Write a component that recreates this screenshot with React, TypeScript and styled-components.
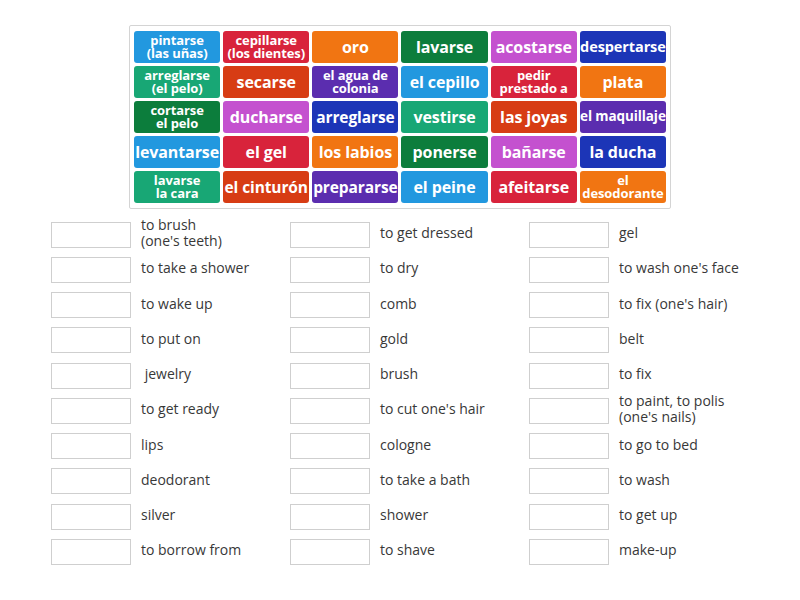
import React from "react";
import styled, { createGlobalStyle } from "styled-components";

const Global = createGlobalStyle`
  html, body { margin: 0; padding: 0; background: #ffffff; }
  body { font-family: "Open Sans", "DejaVu Sans", sans-serif; }
`;

const COLORS: Record<string, string> = {
  blue: "#2298df",
  red: "#d8233b",
  orange: "#f17512",
  darkgreen: "#0c7d3c",
  pink: "#c451cf",
  darkblue: "#1c35b7",
  green: "#18a775",
  redorange: "#d73c14",
  purple: "#5b2daf",
};

type Tile = { text: string[]; color: string; size?: number };

const tiles: Tile[] = [
  { text: ["pintarse", "(las uñas)"], color: "blue", size: 13 },
  { text: ["cepillarse", "(los dientes)"], color: "red", size: 13 },
  { text: ["oro"], color: "orange" },
  { text: ["lavarse"], color: "darkgreen" },
  { text: ["acostarse"], color: "pink" },
  { text: ["despertarse"], color: "darkblue", size: 14.5 },

  { text: ["arreglarse", "(el pelo)"], color: "green", size: 13 },
  { text: ["secarse"], color: "redorange" },
  { text: ["el agua de", "colonia"], color: "purple", size: 13 },
  { text: ["el cepillo"], color: "blue" },
  { text: ["pedir", "prestado a"], color: "red", size: 13 },
  { text: ["plata"], color: "orange" },

  { text: ["cortarse", "el pelo"], color: "darkgreen", size: 13 },
  { text: ["ducharse"], color: "pink" },
  { text: ["arreglarse"], color: "darkblue", size: 15.5 },
  { text: ["vestirse"], color: "green" },
  { text: ["las joyas"], color: "redorange" },
  { text: ["el maquillaje"], color: "purple", size: 13.5 },

  { text: ["levantarse"], color: "blue", size: 16 },
  { text: ["el gel"], color: "red" },
  { text: ["los labios"], color: "orange" },
  { text: ["ponerse"], color: "darkgreen" },
  { text: ["bañarse"], color: "pink" },
  { text: ["la ducha"], color: "darkblue" },

  { text: ["lavarse", "la cara"], color: "green", size: 13 },
  { text: ["el cinturón"], color: "redorange", size: 15.5 },
  { text: ["prepararse"], color: "purple", size: 15.5 },
  { text: ["el peine"], color: "blue" },
  { text: ["afeitarse"], color: "red" },
  { text: ["el", "desodorante"], color: "orange", size: 13 },
];

const columns: string[][][] = [
  [
    ["to brush", "(one's teeth)"],
    ["to take a shower"],
    ["to wake up"],
    ["to put on"],
    [" jewelry"],
    ["to get ready"],
    ["lips"],
    ["deodorant"],
    ["silver"],
    ["to borrow from"],
  ],
  [
    ["to get dressed"],
    ["to dry"],
    ["comb"],
    ["gold"],
    ["brush"],
    ["to cut one's hair"],
    ["cologne"],
    ["to take a bath"],
    ["shower"],
    ["to shave"],
  ],
  [
    ["gel"],
    ["to wash one's face"],
    ["to fix (one's hair)"],
    ["belt"],
    ["to fix"],
    ["to paint, to polis", "(one's nails)"],
    ["to go to bed"],
    ["to wash"],
    ["to get up"],
    ["make-up"],
  ],
];

const Page = styled.div`
  width: 800px;
  height: 600px;
  padding-top: 25px;
  box-sizing: border-box;
`;

const Panel = styled.div`
  width: 542px;
  box-sizing: border-box;
  margin: 0 auto;
  border: 1px solid #d4d4d4;
  border-radius: 2px;
  padding: 5px 4px;
  display: grid;
  grid-template-columns: repeat(6, 1fr);
  grid-auto-rows: 32px;
  gap: 3px 3px;
  background: #fff;
`;

const TileBox = styled.div<{ $bg: string; $size: number }>`
  background: ${(p) => p.$bg};
  border-radius: 3px;
  color: #ffffff;
  font-family: "Open Sans", sans-serif;
  font-weight: 700;
  font-size: ${(p) => p.$size}px;
  line-height: ${(p) => (p.$size <= 13.5 ? 13.5 : 18)}px;
  display: flex;
  align-items: center;
  justify-content: center;
  text-align: center;
  white-space: nowrap;
  overflow: hidden;
  letter-spacing: -0.1px;
`;

const List = styled.div`
  display: flex;
  padding-left: 51px;
  margin-top: 6.5px;
`;

const Column = styled.div`
  width: 239px;
  display: flex;
  flex-direction: column;
`;

const Row = styled.div`
  height: 35.25px;
  display: flex;
  align-items: center;
  gap: 10px;
`;

const Slot = styled.div`
  width: 80px;
  height: 26px;
  box-sizing: border-box;
  border: 1px solid #cfcfcf;
  background: #fff;
  flex-shrink: 0;
  margin-top: 3px;
`;

const Label = styled.div`
  font-family: "Open Sans", sans-serif;
  font-size: 14px;
  line-height: 16px;
  color: #383838;
  white-space: pre;
`;

function Lines({ lines }: { lines: string[] }) {
  return (
    <span>
      {lines.map((l, j) => (
        <React.Fragment key={j}>
          {j > 0 && <br />}
          {l}
        </React.Fragment>
      ))}
    </span>
  );
}

export default function App() {
  return (
    <Page>
      <Global />
      <Panel>
        {tiles.map((t, i) => (
          <TileBox key={i} $bg={COLORS[t.color]} $size={t.size ?? 16}>
            <Lines lines={t.text} />
          </TileBox>
        ))}
      </Panel>
      <List>
        {columns.map((col, ci) => (
          <Column key={ci}>
            {col.map((lines, ri) => (
              <Row key={ri}>
                <Slot />
                <Label>
                  <Lines lines={lines} />
                </Label>
              </Row>
            ))}
          </Column>
        ))}
      </List>
    </Page>
  );
}
